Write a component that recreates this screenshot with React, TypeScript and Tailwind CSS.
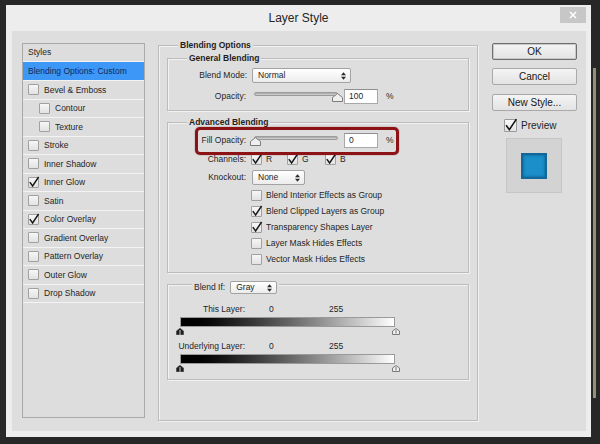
import React from 'react';

function Check({ checked = false, big = false }: { checked?: boolean; big?: boolean }) {
  return (
    <span
      className={
        big
          ? 'relative shrink-0 w-[13px] h-[13px] border border-[#9a9a9a] rounded-[1px] bg-gradient-to-b from-[#f9f9f9] to-[#e3e3e3]'
          : 'relative shrink-0 w-[11px] h-[11px] border border-[#a0a0a0] rounded-[1px] bg-gradient-to-b from-[#f7f7f7] to-[#e2e2e2]'
      }
    >
      {checked && (
        <svg
          className="absolute left-[-1px] top-[-2px]"
          width={big ? 14 : 12}
          height={big ? 14 : 12}
          viewBox="0 0 12 12"
        >
          <path d="M1.8 6.2 L4.6 10 L10.6 1" fill="none" stroke="#141414" strokeWidth="1.4" />
        </svg>
      )}
    </span>
  );
}

function Arrows() {
  return (
    <svg width="5" height="8" viewBox="0 0 5 8">
      <path d="M0 3.3 L2.5 0.3 L5 3.3 Z M0 4.7 L2.5 7.7 L5 4.7 Z" fill="#2a2a2a" />
    </svg>
  );
}

function Select({ cls, text }: { cls: string; text: string }) {
  return (
    <div
      className={`${cls} flex items-center justify-between border border-[#a3a3a3] rounded-[2px] bg-gradient-to-b from-[#ffffff] to-[#ececec] pl-[5px] pr-[4px]`}
    >
      <span>{text}</span>
      <Arrows />
    </div>
  );
}

function Thumb() {
  return (
    <svg width="11" height="9" viewBox="0 0 11 9">
      <path d="M0.5 4.5 L5.5 0.5 L10.5 4.5 L10.5 8.5 L0.5 8.5 Z" fill="#efefef" stroke="#7c7c7c" strokeWidth="1" strokeLinejoin="round" />
    </svg>
  );
}

function Slider({ value }: { value: number }) {
  return (
    <div className="relative w-[84px] h-[15px] ml-[8px]">
      <div className="absolute left-0 right-0 top-[3px] h-[4px] rounded-full border border-[#9b9b9b] bg-gradient-to-b from-[#a5a5a5] to-[#d4d4d4]" />
      <div className="absolute top-[4px]" style={{ left: `${-4 + value * 81.5}px` }}>
        <Thumb />
      </div>
    </div>
  );
}

function NumBox({ v }: { v: string }) {
  return (
    <div className="ml-[6px] w-[34px] h-[15px] border border-[#a8a8a8] border-t-[#8f8f8f] bg-white pl-[4px] flex items-center">
      {v}
    </div>
  );
}

function BlackThumb() {
  return (
    <svg width="8" height="7" viewBox="0 0 8 7">
      <path d="M0.5 3 L4 0.3 L7.5 3 L7.5 6.8 L0.5 6.8 Z" fill="#1d1d1d" stroke="#3a3a3a" strokeWidth="0.6" />
      <path d="M4 2 L4 6.8" stroke="#cfcfcf" strokeWidth="1" />
    </svg>
  );
}

function WhiteThumb() {
  return (
    <svg width="8" height="7" viewBox="0 0 8 7">
      <path d="M0.5 3 L4 0.5 L7.5 3 L7.5 6.5 L0.5 6.5 Z" fill="#ededed" stroke="#7a7a7a" strokeWidth="1" strokeLinejoin="round" />
      <path d="M4 2 L4 5.5" stroke="#7a7a7a" strokeWidth="1" />
    </svg>
  );
}

const box = 'border border-[#bcbcbc] shadow-[inset_1px_1px_0_#f2f2f2,1px_1px_0_#f2f2f2]';
const legend = '-mt-[7px] w-fit px-[2px] bg-[#dedede] leading-[12px] font-bold';

const styles: { label: string; indent?: boolean; checked?: boolean }[] = [
  { label: 'Bevel & Emboss' },
  { label: 'Contour', indent: true },
  { label: 'Texture', indent: true },
  { label: 'Stroke' },
  { label: 'Inner Shadow' },
  { label: 'Inner Glow', checked: true },
  { label: 'Satin' },
  { label: 'Color Overlay', checked: true },
  { label: 'Gradient Overlay' },
  { label: 'Pattern Overlay' },
  { label: 'Outer Glow' },
  { label: 'Drop Shadow' },
];

function StylesPanel() {
  return (
    <div className="w-[123px] h-[375px] shrink-0 border border-[#a9a9a9] bg-[#dddddd] flex flex-col">
      <div className="h-[18px] shrink-0 border-b border-[#f3f3f3] pl-[5px] flex items-center">Styles</div>
      <div className="h-[19px] shrink-0 border-b border-[#f3f3f3] bg-[#3c97f6] text-[#12285a] pl-[5px] flex items-center">
        Blending Options: Custom
      </div>
      {styles.map((s) => (
        <div
          key={s.label}
          className={`h-[18.5px] shrink-0 border-b border-[#f3f3f3] flex items-center gap-[5px] ${s.indent ? 'pl-[16px]' : 'pl-[5px]'}`}
        >
          <Check checked={s.checked} />
          <span>{s.label}</span>
        </div>
      ))}
    </div>
  );
}

function MainPanel() {
  return (
    <div className={`ml-[13px] mt-[2px] w-[320px] h-[376px] shrink-0 ${box}`}>
      <div className={`${legend} ml-[19px]`}>Blending Options</div>

      {/* General Blending */}
      <div className={`mt-[7px] mx-[8px] pb-[6px] ${box}`}>
        <div className={`${legend} ml-[19px]`}>General Blending</div>
        <div className="mt-[4px] h-[15px] flex items-center">
          <span className="w-[79px] text-right">Blend Mode:</span>
          <div className="ml-[5px]">
            <Select cls="w-[99px] h-[15px]" text="Normal" />
          </div>
        </div>
        <div className="mt-[6px] h-[15px] flex items-center">
          <span className="w-[78px] text-right">Opacity:</span>
          <Slider value={1} />
          <NumBox v="100" />
          <span className="ml-[8px]">%</span>
        </div>
      </div>

      {/* Advanced Blending */}
      <div className={`relative mt-[11px] mx-[8px] pb-[5px] ${box}`}>
        <div className={`${legend} ml-[19px]`}>Advanced Blending</div>
        <div className="mt-[5px] h-[15px] flex items-center">
          <span className="w-[78px] text-right">Fill Opacity:</span>
          <Slider value={0} />
          <NumBox v="0" />
          <span className="ml-[8px]">%</span>
        </div>
        <div className="mt-[4px] h-[14px] flex items-center">
          <span className="w-[78px] text-right">Channels:</span>
          <div className="ml-[5px] w-[36px] flex items-center gap-[4px]">
            <Check checked />
            <span>R</span>
          </div>
          <div className="w-[38px] flex items-center gap-[4px]">
            <Check checked />
            <span>G</span>
          </div>
          <div className="flex items-center gap-[4px]">
            <Check checked />
            <span>B</span>
          </div>
        </div>
        <div className="mt-[4px] h-[15px] flex items-center">
          <span className="w-[78px] text-right">Knockout:</span>
          <div className="ml-[6px]">
            <Select cls="w-[53px] h-[15px]" text="None" />
          </div>
        </div>
        <div className="mt-[2px] flex flex-col">
          {[
            ['Blend Interior Effects as Group', false],
            ['Blend Clipped Layers as Group', true],
            ['Transparency Shapes Layer', true],
            ['Layer Mask Hides Effects', false],
            ['Vector Mask Hides Effects', false],
          ].map(([t, c]) => (
            <div key={t as string} className="h-[16px] pl-[83px] flex items-center gap-[4px]">
              <Check checked={c as boolean} />
              <span>{t as string}</span>
            </div>
          ))}
        </div>
        {/* highlight annotation */}
        <div className="absolute left-[27px] top-[4px] w-[204px] h-[28px] border-[3px] border-[#8d1216] rounded-[5px] shadow-[0_0_1px_#5a0a0a]" />
      </div>

      {/* Blend If */}
      <div className={`mt-[11px] mx-[8px] pb-[7px] ${box}`}>
        <div className="-mt-[4px] ml-[24px] w-fit px-[2px] h-[13px] bg-[#dedede] flex items-center gap-[5px]">
          <span>Blend If:</span>
          <Select cls="w-[47px] h-[13px]" text="Gray" />
        </div>
        <div className="mt-[10px] h-[10px] flex items-center">
          <span className="w-[77px] text-right">This Layer:</span>
          <span className="w-[60px] pl-[24px]">0</span>
          <span className="pl-[24px]">255</span>
        </div>
        <div className="mt-[3px] ml-[12px] w-[215px] h-[10px] border border-[#9a9a9a] bg-gradient-to-r from-[#000000] to-[#ffffff]" />
        <div className="mt-[1px] ml-[8px] w-[224px] h-[7px] flex justify-between">
          <BlackThumb />
          <WhiteThumb />
        </div>
        <div className="mt-[6px] h-[10px] flex items-center">
          <span className="w-[77px] text-right">Underlying Layer:</span>
          <span className="w-[60px] pl-[24px]">0</span>
          <span className="pl-[24px]">255</span>
        </div>
        <div className="mt-[3px] ml-[12px] w-[215px] h-[10px] border border-[#9a9a9a] bg-gradient-to-r from-[#000000] to-[#ffffff]" />
        <div className="mt-[1px] ml-[8px] w-[224px] h-[7px] flex justify-between">
          <BlackThumb />
          <WhiteThumb />
        </div>
      </div>
    </div>
  );
}

const btn =
  'w-[85px] h-[17px] rounded-[2px] bg-gradient-to-b from-[#f4f4f4] to-[#e3e3e3] flex items-center justify-center text-[10px] text-[#151515]';

function RightColumn() {
  return (
    <div className="ml-[14px] w-[85px] shrink-0 flex flex-col">
      <div className={`${btn} border border-[#6e6e6e] shadow-[inset_0_0_0_1px_#c9c9c9]`}>OK</div>
      <div className={`${btn} mt-[8px] border border-[#a9a9a9]`}>Cancel</div>
      <div className={`${btn} mt-[9px] border border-[#a9a9a9]`}>New Style...</div>
      <div className="mt-[8px] ml-[12px] h-[13px] flex items-center gap-[4px] text-[10px]">
        <Check checked big />
        <span>Preview</span>
      </div>
      <div className="mt-[6px] ml-[14px] w-[56px] h-[55px] bg-[#d3d3d3] border border-[#c6c6c6] flex items-center justify-center">
        <div className="w-[26px] h-[26px] bg-[#1a8fca] border-[2px] border-[#13679a] shadow-[inset_0_0_3px_#0d5a86]" />
      </div>
    </div>
  );
}

export default function App() {
  return (
    <div className="w-[600px] h-[444px] bg-[#272727] flex items-start overflow-hidden font-['Liberation_Sans',Arial,sans-serif] text-[8.5px] text-[#1f1f1f] leading-none">
      <div className="ml-[6px] mt-[5px] w-[585px] h-[432px] bg-[#ededed] flex flex-col shrink-0">
        <div className="h-[26px] shrink-0 grid grid-cols-[1fr_auto_1fr] items-center">
          <div />
          <div className="text-[12px] text-[#262626]">Layer Style</div>
          <div className="justify-self-end self-start mt-[2px] mr-[5px] w-[26px] h-[16px] bg-[#c7c7c7] flex items-center justify-center">
            <svg width="8" height="8" viewBox="0 0 8 8">
              <path d="M1 1 L7 7 M7 1 L1 7" stroke="#ffffff" strokeWidth="1.5" />
            </svg>
          </div>
        </div>
        <div className="ml-[6px] w-[574px] h-[400px] bg-[#dedede] flex items-start pl-[10px] pt-[12px]">
          <StylesPanel />
          <MainPanel />
          <RightColumn />
        </div>
      </div>
      <div className="ml-[2px] mt-[68px] w-[3px] h-[330px] bg-[#c4bd9b] opacity-70" />
    </div>
  );
}
